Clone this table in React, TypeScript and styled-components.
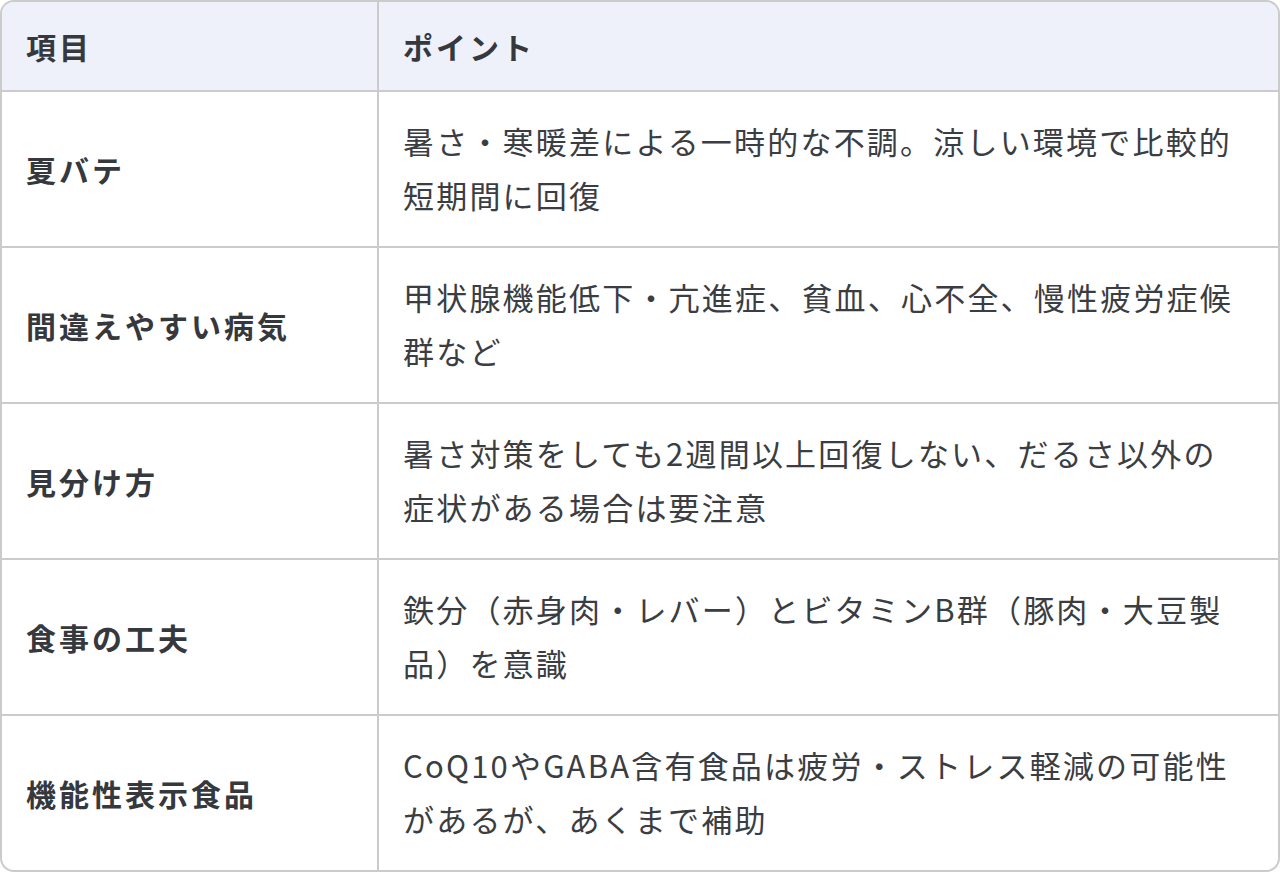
import styled, { createGlobalStyle } from "styled-components";

const GlobalStyle = createGlobalStyle`
  html, body {
    margin: 0;
    padding: 0;
    background: #ffffff;
  }
  body {
    font-family: "Noto Sans CJK JP", "Noto Sans", sans-serif;
  }
`;

const Wrapper = styled.div`
  width: 1280px;
  height: 872px;
  box-sizing: border-box;
  border: 2px solid #cbcbcb;
  border-radius: 14px;
  overflow: hidden;
`;

const Table = styled.table`
  width: 100%;
  border-collapse: separate;
  border-spacing: 0;
  table-layout: fixed;
  color: #3a3d42;
  font-size: 31px;
  line-height: 54px;
  letter-spacing: 2.2px;
`;

const HeadCell = styled.th<{ $first?: boolean }>`
  background: #eef1fa;
  text-align: left;
  font-weight: 700;
  color: #35383d;
  font-size: 30px;
  letter-spacing: 3px;
  height: 90px;
  box-sizing: border-box;
  padding: 0 0 0 24px;
  border-bottom: 2px solid #cbcbcb;
  border-right: ${(p) => (p.$first ? "2px solid #cbcbcb" : "none")};
`;

const Row = styled.tr<{ $last?: boolean }>`
  td {
    height: ${(p) => (p.$last ? "154px" : "156px")};
    border-bottom: ${(p) => (p.$last ? "none" : "2px solid #cbcbcb")};
  }
`;

const LabelCell = styled.td`
  box-sizing: border-box;
  padding: 0 0 0 24px;
  font-weight: 700;
  font-size: 30px;
  letter-spacing: 3px;
  color: #35383d;
  vertical-align: middle;
  border-right: 2px solid #cbcbcb;
`;

const TextCell = styled.td`
  box-sizing: border-box;
  padding: 22px 36px 24px 24px;
  vertical-align: middle;
`;

const rows: [string, string][] = [
  ["夏バテ", "暑さ・寒暖差による一時的な不調。涼しい環境で比較的短期間に回復"],
  ["間違えやすい病気", "甲状腺機能低下・亢進症、貧血、心不全、慢性疲労症候群など"],
  ["見分け方", "暑さ対策をしても2週間以上回復しない、だるさ以外の症状がある場合は要注意"],
  ["食事の工夫", "鉄分（赤身肉・レバー）とビタミンB群（豚肉・大豆製品）を意識"],
  ["機能性表示食品", "CoQ10やGABA含有食品は疲労・ストレス軽減の可能性があるが、あくまで補助"],
];

function App() {
  return (
    <>
      <GlobalStyle />
      <Wrapper>
        <Table>
          <colgroup>
            <col style={{ width: 377 }} />
            <col />
          </colgroup>
          <thead>
            <tr>
              <HeadCell $first>項目</HeadCell>
              <HeadCell>ポイント</HeadCell>
            </tr>
          </thead>
          <tbody>
            {rows.map(([label, text], i) => (
              <Row key={label} $last={i === rows.length - 1}>
                <LabelCell>{label}</LabelCell>
                <TextCell>{text}</TextCell>
              </Row>
            ))}
          </tbody>
        </Table>
      </Wrapper>
    </>
  );
}

export default App;
